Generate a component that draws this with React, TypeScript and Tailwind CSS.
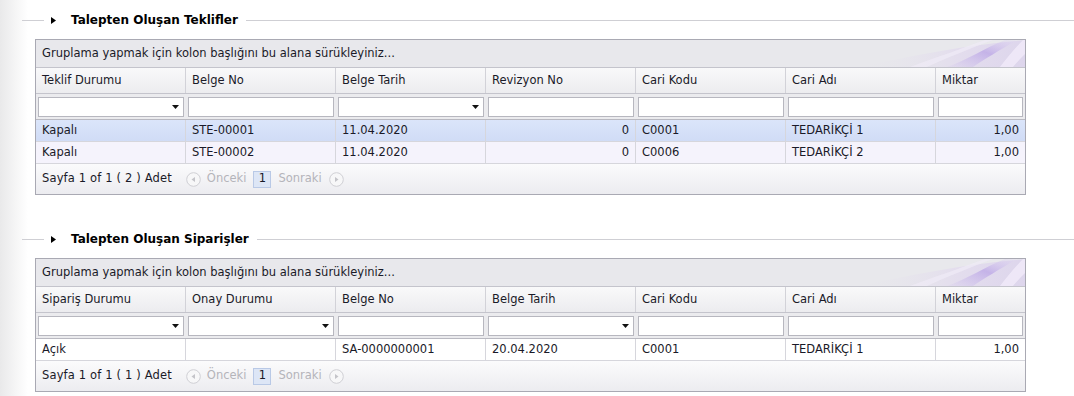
import * as React from "react"

type Col = { title: string; filter: "select" | "text"; align?: "right" }

const offerCols: Col[] = [
  { title: "Teklif Durumu", filter: "select" },
  { title: "Belge No", filter: "text" },
  { title: "Belge Tarih", filter: "select" },
  { title: "Revizyon No", filter: "text", align: "right" },
  { title: "Cari Kodu", filter: "text" },
  { title: "Cari Adı", filter: "text" },
  { title: "Miktar", filter: "text", align: "right" },
]

const offerRows = [
  ["Kapalı", "STE-00001", "11.04.2020", "0", "C0001", "TEDARİKÇİ 1", "1,00"],
  ["Kapalı", "STE-00002", "11.04.2020", "0", "C0006", "TEDARİKÇİ 2", "1,00"],
]

const orderCols: Col[] = [
  { title: "Sipariş Durumu", filter: "select" },
  { title: "Onay Durumu", filter: "select" },
  { title: "Belge No", filter: "text" },
  { title: "Belge Tarih", filter: "select" },
  { title: "Cari Kodu", filter: "text" },
  { title: "Cari Adı", filter: "text" },
  { title: "Miktar", filter: "text", align: "right" },
]

const orderRows = [["Açık", "", "SA-0000000001", "20.04.2020", "C0001", "TEDARİKÇİ 1", "1,00"]]

const gridCols = "grid grid-cols-[150px_150px_150px_150px_150px_150px_1fr]"

function SectionTitle({ title }: { title: string }) {
  return (
    <div className="flex h-[20px] items-center">
      <div className="ml-[22px] h-px w-[22px] bg-[#cfcfd4]" />
      <svg className="ml-[7px]" width="5" height="7" viewBox="0 0 5 7">
        <path d="M0 0 L5 3.5 L0 7 Z" fill="#000" />
      </svg>
      <span className="ml-[15px] text-[12px] font-bold text-black">{title}</span>
      <div className="ml-[8px] h-px flex-1 bg-[#cfcfd4]" />
    </div>
  )
}

function Swoosh() {
  return (
    <svg
      className="absolute right-0 top-0"
      width="170"
      height="27"
      viewBox="0 0 170 27"
      preserveAspectRatio="none"
    >
      <defs>
        <linearGradient id="sw1" x1="0" y1="0" x2="1" y2="0">
          <stop offset="0" stopColor="#e8e8ec" stopOpacity="0" />
          <stop offset="0.6" stopColor="#e0d6ee" />
          <stop offset="1" stopColor="#d6c9ec" />
        </linearGradient>
        <linearGradient id="sw2" x1="0" y1="1" x2="1" y2="0">
          <stop offset="0" stopColor="#c9b8ec" stopOpacity="0.1" />
          <stop offset="0.55" stopColor="#bba6e6" />
          <stop offset="1" stopColor="#e2d8f3" stopOpacity="0.3" />
        </linearGradient>
      </defs>
      <path d="M0 27 C50 18 100 6 170 0 L170 27 Z" fill="url(#sw1)" opacity="0.6" />
      <path d="M92 27 C112 20 130 8 150 0 L162 0 C145 10 128 20 118 27 Z" fill="url(#sw2)" opacity="0.75" />
      <path d="M145 27 C152 18 160 8 168 0 L170 0 L170 14 C166 18 162 22 158 27 Z" fill="#efe9f8" opacity="0.9" />
      <path d="M55 27 C80 18 108 8 130 0 L138 0 C116 8 92 18 72 27 Z" fill="#efebf6" opacity="0.7" />
    </svg>
  )
}

function Dropdown() {
  return (
    <div className="relative h-[20px] w-full border border-[#b7b7bf] bg-white">
      <svg className="absolute right-[4px] top-[7px]" width="7" height="4" viewBox="0 0 7 4">
        <path d="M0 0 L7 0 L3.5 4 Z" fill="#111" />
      </svg>
    </div>
  )
}

function CircleArrow({ dir }: { dir: "left" | "right" }) {
  return (
    <svg width="15" height="15" viewBox="0 0 15 15">
      <circle cx="7.5" cy="7.5" r="6.8" fill="#f7f7f8" stroke="#cfcfd4" />
      {dir === "left" ? (
        <path d="M5.5 7.5 L9 5 L9 10 Z" fill="#c4c4c9" />
      ) : (
        <path d="M9.5 7.5 L6 5 L6 10 Z" fill="#c4c4c9" />
      )}
    </svg>
  )
}

function Grid({ cols, rows, count }: { cols: Col[]; rows: string[][]; count: number }) {
  return (
    <div className="ml-[35px] w-[991px] border border-[#a9a9b3] text-[11.5px] text-[#1a1a28]">
      {/* group panel */}
      <div className="relative h-[28px] overflow-hidden border-b border-[#c4c4cc] bg-[#e8e8ec]">
        <Swoosh />
        <div className="relative flex h-full items-center pl-[6px]">
          Gruplama yapmak için kolon başlığını bu alana sürükleyiniz...
        </div>
      </div>

      {/* header */}
      <div className={`${gridCols} h-[26px] border-b border-[#c4c4cc] bg-gradient-to-b from-[#f9f9fa] to-[#ececef]`}>
        {cols.map((c, i) => (
          <div
            key={c.title}
            className={`flex items-center pl-[6px] ${i < cols.length - 1 ? "border-r border-[#d2d2d8]" : ""}`}
          >
            {c.title}
          </div>
        ))}
      </div>

      {/* filter row */}
      <div className={`${gridCols} h-[26px] border-b border-[#b9b9c1] bg-[#ebebee]`}>
        {cols.map((c) => (
          <div key={c.title} className="px-[2px] pt-[3px]">
            {c.filter === "select" ? (
              <Dropdown />
            ) : (
              <div className="h-[20px] w-full border border-[#b7b7bf] bg-white" />
            )}
          </div>
        ))}
      </div>

      {/* data */}
      {rows.map((r, ri) => {
        const bg =
          rows.length === 1
            ? "bg-white"
            : ri === 0
              ? "bg-gradient-to-b from-[#dbe5fa] to-[#d0dcf6]"
              : "bg-[#f5f3fc]"
        return (
          <div key={ri} className={`${gridCols} h-[22px] border-b border-[#d6d6dc] ${bg}`}>
            {r.map((v, ci) => (
              <div
                key={ci}
                className={`flex items-center px-[6px] ${ci < r.length - 1 ? "border-r border-[#d6d6dc]" : ""} ${
                  cols[ci].align === "right" ? "justify-end" : ""
                }`}
              >
                {v}
              </div>
            ))}
          </div>
        )
      })}

      {/* pager */}
      <div className="flex h-[30px] items-center bg-gradient-to-b from-[#fbfbfc] to-[#ececf0] pl-[6px]">
        <span className="tracking-[0.15px]">Sayfa 1 of 1 ( {count} ) Adet</span>
        <span className="ml-[14px] flex items-center">
          <CircleArrow dir="left" />
        </span>
        <span className="ml-[6px] text-[#b4b4ba]">Önceki</span>
        <span className="ml-[7px] flex h-[17px] w-[18px] items-center justify-center border border-[#b9c9e6] bg-[#dde6f6]">
          1
        </span>
        <span className="ml-[7px] text-[#b4b4ba]">Sonraki</span>
        <span className="ml-[7px] flex items-center">
          <CircleArrow dir="right" />
        </span>
      </div>
    </div>
  )
}

export default function App() {
  return (
    <div
      className="min-h-[396px] w-full bg-[linear-gradient(to_right,#e9e9ea,#ffffff_28px)] pt-[10px]"
      style={{ fontFamily: '"DejaVu Sans", Verdana, sans-serif' }}
    >
      <SectionTitle title="Talepten Oluşan Teklifler" />
      <div className="mt-[9px]">
        <Grid cols={offerCols} rows={offerRows} count={2} />
      </div>

      <div className="mt-[34px]">
        <SectionTitle title="Talepten Oluşan Siparişler" />
      </div>
      <div className="mt-[9px]">
        <Grid cols={orderCols} rows={orderRows} count={1} />
      </div>
    </div>
  )
}
